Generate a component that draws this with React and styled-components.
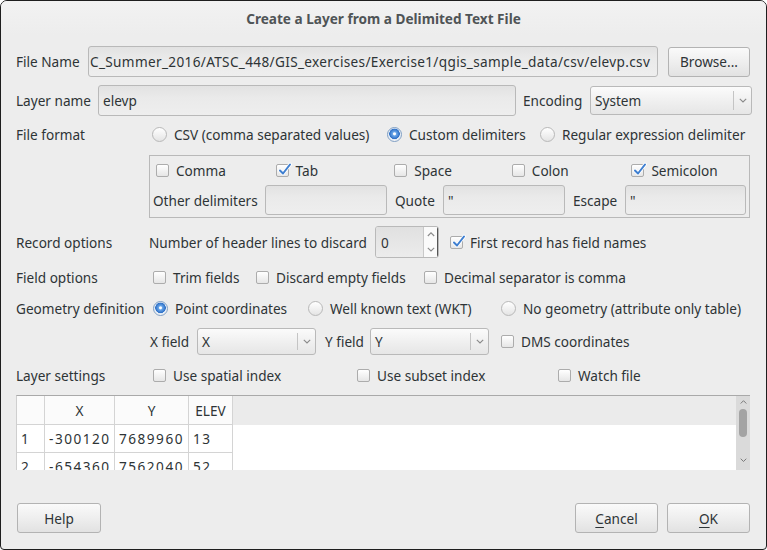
import React from "react";
import styled, { createGlobalStyle } from "styled-components";

const GlobalStyle = createGlobalStyle`
  html, body {
    margin: 0;
    padding: 0;
    background: #ffffff;
  }
  * {
    box-sizing: border-box;
  }
`

const Dialog = styled.div`
  width: 767px;
  height: 550px;
  background: #ededed;
  border: 1px solid #1e1e1e;
  border-radius: 7px 7px 4px 4px;
  overflow: hidden;
  font-family: "Noto Sans", "Open Sans", sans-serif;
  font-size: 13.6px;
  color: #2e3436;
  display: flex;
  flex-direction: column;
`

const TitleBar = styled.div`
  height: 34px;
  flex: none;
  display: flex;
  align-items: center;
  justify-content: center;
  font-weight: bold;
  color: #4f5456;
  background: linear-gradient(#f2f2f2, #ededed);
`

const Body = styled.div`
  flex: 1;
  display: flex;
  flex-direction: column;
  padding: 11px 16px 16px 15px;
`

const Row = styled.div`
  display: flex;
  align-items: center;
  height: ${(p) => p.h ?? 20}px;
  margin-top: ${(p) => p.mt ?? 0}px;
`

const OptionRow = styled.div`
  display: grid;
  grid-template-columns: 133px 1fr;
  align-items: center;
  height: ${(p) => p.h ?? 20}px;
  margin-top: ${(p) => p.mt ?? 0}px;
`

const Label = styled.span`
  white-space: nowrap;
  flex: none;
  width: ${(p) => (p.w ? p.w + "px" : "auto")};
  margin-left: ${(p) => p.ml ?? 0}px;
`

const TextInput = styled.div`
  height: ${(p) => p.h ?? 31}px;
  flex: ${(p) => (p.w ? "none" : "1")};
  width: ${(p) => (p.w ? p.w + "px" : "auto")};
  border: 1px solid #b9b9b9;
  border-radius: 3px;
  background: linear-gradient(#e2e2e2, #eaeaea 40%, #eeeeee);
  display: flex;
  align-items: center;
  padding: 0 ${(p) => p.pad ?? 4}px;
  white-space: nowrap;
  overflow: hidden;
  color: #2e3436;
  letter-spacing: ${(p) => p.ls ?? 0}px;
`

const Button = styled.div`
  height: 30px;
  width: ${(p) => p.w ?? 82}px;
  flex: none;
  border: 1px solid #b3b3b3;
  border-radius: 3px;
  background: linear-gradient(#fafafa, #ececec 60%, #e2e2e2);
  display: flex;
  align-items: center;
  justify-content: center;
  color: #2e3436;
  margin-left: ${(p) => p.ml ?? 0}px;
  u {
    text-decoration: underline;
    text-underline-offset: 3px;
  }
`

const SelectBox = styled.div`
  height: ${(p) => p.h ?? 29}px;
  width: ${(p) => p.w}px;
  flex: none;
  border: 1px solid #b9b9b9;
  border-radius: 3px;
  background: linear-gradient(#fbfbfb, #eeeeee 60%, #e6e6e6);
  display: flex;
  align-items: center;
  padding-left: 4px;
`

const SelectText = styled.span`
  flex: 1;
`

const SelectArrow = styled.span`
  width: 18px;
  height: 70%;
  border-left: 1px solid #c4c4c4;
  display: flex;
  align-items: center;
  justify-content: center;
`

const Options = styled.div`
  display: flex;
  align-items: center;
`

const Spread = styled.div`
  display: grid;
  grid-template-columns: ${(p) => p.cols};
  align-items: center;
`

const Choice = styled.label`
  display: flex;
  align-items: center;
  white-space: nowrap;
  gap: 7px;
  padding-left: ${(p) => p.pl ?? 0}px;
`

const BoxMark = styled.span`
  position: relative;
  width: 13px;
  height: 13px;
  flex: none;
  border: 1px solid #acacac;
  border-radius: 2px;
  background: linear-gradient(#ffffff, #e6e6e6);
  svg {
    position: absolute;
    left: 0px;
    top: -3px;
  }
`

const RadioMark = styled.span`
  width: 15px;
  height: 15px;
  flex: none;
  border-radius: 50%;
  border: 1px solid ${(p) => (p.on ? "#7f9fc4" : "#b8b8b8")};
  background: ${(p) =>
    p.on
      ? "radial-gradient(circle at 50% 45%, #ffffff 0 1px, #6aa6e8 2px, #2d6fc6 5px, #dfe9f5 5.5px, #f5f5f5 7px)"
      : "linear-gradient(#ffffff, #e4e4e4)"};
`

const DelimBox = styled.div`
  margin: 11px 0 0 133px;
  border: 1px solid #b9b9b9;
  padding: 0 3px 1px 3px;
`

const DelimGrid = styled.div`
  display: grid;
  grid-template-columns: repeat(5, 1fr);
  align-items: center;
  height: 28px;
`

const DelimFields = styled.div`
  display: grid;
  grid-template-columns: 104px 122px 40px 122px 44px 1fr;
  column-gap: 8px;
  align-items: center;
  height: 32px;
`

const Spin = styled.div`
  display: flex;
  height: 32px;
  width: 64px;
  flex: none;
  margin: 0 11px 0 9px;
  border: 1px solid #b9b9b9;
  border-radius: 3px;
  overflow: hidden;
`

const SpinField = styled.div`
  flex: 1;
  display: flex;
  align-items: center;
  padding-left: 5px;
  background: linear-gradient(#e0e0e0, #ececec);
  border-right: 1px solid #c9c9c9;
`

const SpinButtons = styled.div`
  width: 14px;
  display: flex;
  flex-direction: column;
  align-items: center;
  justify-content: space-around;
  background: #fafafa;
  border-right: 1px solid #555;
`

const Table = styled.div`
  margin-top: 10px;
  height: 75px;
  border-top: 1px solid #a9a9a9;
  border-left: 1px solid #cfcfcf;
  display: flex;
`

const TableView = styled.div`
  flex: 1;
  background: #ffffff;
  overflow: hidden;
`

const HeadRow = styled.div`
  display: flex;
  height: 29px;
  background: #ebebeb;
`

const BodyRow = styled.div`
  display: flex;
  height: 28px;
`

const Cell = styled.div`
  width: ${(p) => p.w}px;
  flex: none;
  display: flex;
  align-items: center;
  justify-content: ${(p) => (p.head ? "center" : "flex-start")};
  padding-left: ${(p) => (p.head ? 0 : 4)}px;
  border-right: 1px solid #d4d4d4;
  border-bottom: 1px solid #d4d4d4;
  background: ${(p) => (p.head ? "#fbfbfb" : "#ffffff")};
  letter-spacing: ${(p) => (p.head ? 0 : 1.5)}px;
  white-space: nowrap;
`

const ScrollBar = styled.div`
  width: 14px;
  background: #dadada;
  display: flex;
  flex-direction: column;
  align-items: center;
  padding-top: 4px;
`

const Thumb = styled.div`
  width: 8px;
  height: 28px;
  border-radius: 4px;
  background: #a3a3a3;
  margin: 5px 0 auto;
`

const Footer = styled.div`
  margin-top: auto;
  display: flex;
  align-items: center;
  padding-left: 1px;
`

const Spacer = styled.div`
  flex: 1;
`

const Check = () => (
  <svg width="15" height="15" viewBox="0 0 15 15">
    <path d="M3 8.5 L6 11.5 L13 2.5" fill="none" stroke="#ffffff" strokeWidth="3.6" strokeLinecap="round" strokeLinejoin="round" />
    <path d="M3 8.5 L6 11.5 L13 2.5" fill="none" stroke="#3f7fd0" strokeWidth="2" strokeLinecap="round" strokeLinejoin="round" />
  </svg>
)

const Chevron = ({ up, size = 8, color = "#8a8a8a" }) => (
  <svg width={size} height={size * 0.6} viewBox="0 0 10 6">
    <path d={up ? "M1 5 L5 1 L9 5" : "M1 1 L5 5 L9 1"} fill="none" stroke={color} strokeWidth="1.4" />
  </svg>
)

const CheckBox = ({ checked, children, pl }) => (
  <Choice pl={pl}>
    <BoxMark>{checked && <Check />}</BoxMark>
    {children}
  </Choice>
)

const Radio = ({ on, children, pl }) => (
  <Choice pl={pl}>
    <RadioMark on={on} />
    {children}
  </Choice>
)

const Select = ({ value, w, h }) => (
  <SelectBox w={w} h={h}>
    <SelectText>{value}</SelectText>
    <SelectArrow>
      <Chevron />
    </SelectArrow>
  </SelectBox>
)

const columns = [
  { w: 28, head: "" },
  { w: 70, head: "X" },
  { w: 74, head: "Y" },
  { w: 44, head: "ELEV" },
]

const rows = [
  ["1", "-300120", "7689960", "13"],
  ["2", "-654360", "7562040", "52"],
]

export default function App() {
  return (
    <>
      <GlobalStyle />
      <Dialog>
        <TitleBar>Create a Layer from a Delimited Text File</TitleBar>
        <Body>
          <Row h={31}>
            <Label w={72}>File Name</Label>
            <TextInput ls={0.34} pad={1}>C_Summer_2016/ATSC_448/GIS_exercises/Exercise1/qgis_sample_data/csv/elevp.csv</TextInput>
            <Button ml={10}>Browse...</Button>
          </Row>

          <Row h={31} mt={8}>
            <Label w={82}>Layer name</Label>
            <TextInput w={418}>elevp</TextInput>
            <Label w={67} ml={7}>Encoding</Label>
            <Select value="System" w={162} />
          </Row>

          <OptionRow mt={8}>
            <Label>File format</Label>
            <Spread cols="238px 153px 1fr">
              <Radio pl={3}>CSV (comma separated values)</Radio>
              <Radio on>Custom delimiters</Radio>
              <Radio>Regular expression delimiter</Radio>
            </Spread>
          </OptionRow>

          <DelimBox>
            <DelimGrid>
              <CheckBox pl={3}>Comma</CheckBox>
              <CheckBox checked pl={4}>Tab</CheckBox>
              <CheckBox pl={4}>Space</CheckBox>
              <CheckBox pl={3}>Colon</CheckBox>
              <CheckBox checked pl={4}>Semicolon</CheckBox>
            </DelimGrid>
            <DelimFields>
              <Label>Other delimiters</Label>
              <TextInput h={30} />
              <Label>Quote</Label>
              <TextInput h={30}>"</TextInput>
              <Label>Escape</Label>
              <TextInput h={30}>"</TextInput>
            </DelimFields>
          </DelimBox>

          <OptionRow h={32} mt={8}>
            <Label>Record options</Label>
            <Options>
              <Label w={217}>Number of header lines to discard</Label>
              <Spin>
                <SpinField>0</SpinField>
                <SpinButtons>
                  <Chevron up />
                  <Chevron />
                </SpinButtons>
              </Spin>
              <CheckBox checked>First record has field names</CheckBox>
            </Options>
          </OptionRow>

          <OptionRow mt={9}>
            <Label>Field options</Label>
            <Spread cols="107px 168px 1fr">
              <CheckBox pl={4}>Trim fields</CheckBox>
              <CheckBox>Discard empty fields</CheckBox>
              <CheckBox>Decimal separator is comma</CheckBox>
            </Spread>
          </OptionRow>

          <OptionRow mt={11}>
            <Label>Geometry definition</Label>
            <Spread cols="159px 193px 1fr">
              <Radio on pl={4}>Point coordinates</Radio>
              <Radio>Well known text (WKT)</Radio>
              <Radio>No geometry (attribute only table)</Radio>
            </Spread>
          </OptionRow>

          <OptionRow h={27} mt={10}>
            <span />
            <Options>
              <Label w={47} ml={1}>X field</Label>
              <Select value="X" w={119} h={27} />
              <Label w={45} ml={9}>Y field</Label>
              <Select value="Y" w={119} h={27} />
              <Label w={12} />
              <CheckBox>DMS coordinates</CheckBox>
            </Options>
          </OptionRow>

          <OptionRow mt={10}>
            <Label>Layer settings</Label>
            <Spread cols="208px 201px 1fr">
              <CheckBox pl={4}>Use spatial index</CheckBox>
              <CheckBox>Use subset index</CheckBox>
              <CheckBox>Watch file</CheckBox>
            </Spread>
          </OptionRow>

          <Table>
            <TableView>
              <HeadRow>
                {columns.map((c, i) => (
                  <Cell key={i} w={c.w} head>
                    {c.head}
                  </Cell>
                ))}
              </HeadRow>
              {rows.map((r, ri) => (
                <BodyRow key={ri}>
                  {r.map((v, ci) => (
                    <Cell key={ci} w={columns[ci].w}>
                      {v}
                    </Cell>
                  ))}
                </BodyRow>
              ))}
            </TableView>
            <ScrollBar>
              <Chevron up size={7} color="#777" />
              <Thumb />
              <div style={{ marginBottom: 4 }}>
                <Chevron size={7} color="#777" />
              </div>
            </ScrollBar>
          </Table>

          <Footer>
            <Button w={84}>Help</Button>
            <Spacer />
            <Button w={83}>
              <span><u>C</u>ancel</span>
            </Button>
            <Button w={83} ml={9}>
              <span><u>O</u>K</span>
            </Button>
          </Footer>
        </Body>
      </Dialog>
    </>
  )
}
